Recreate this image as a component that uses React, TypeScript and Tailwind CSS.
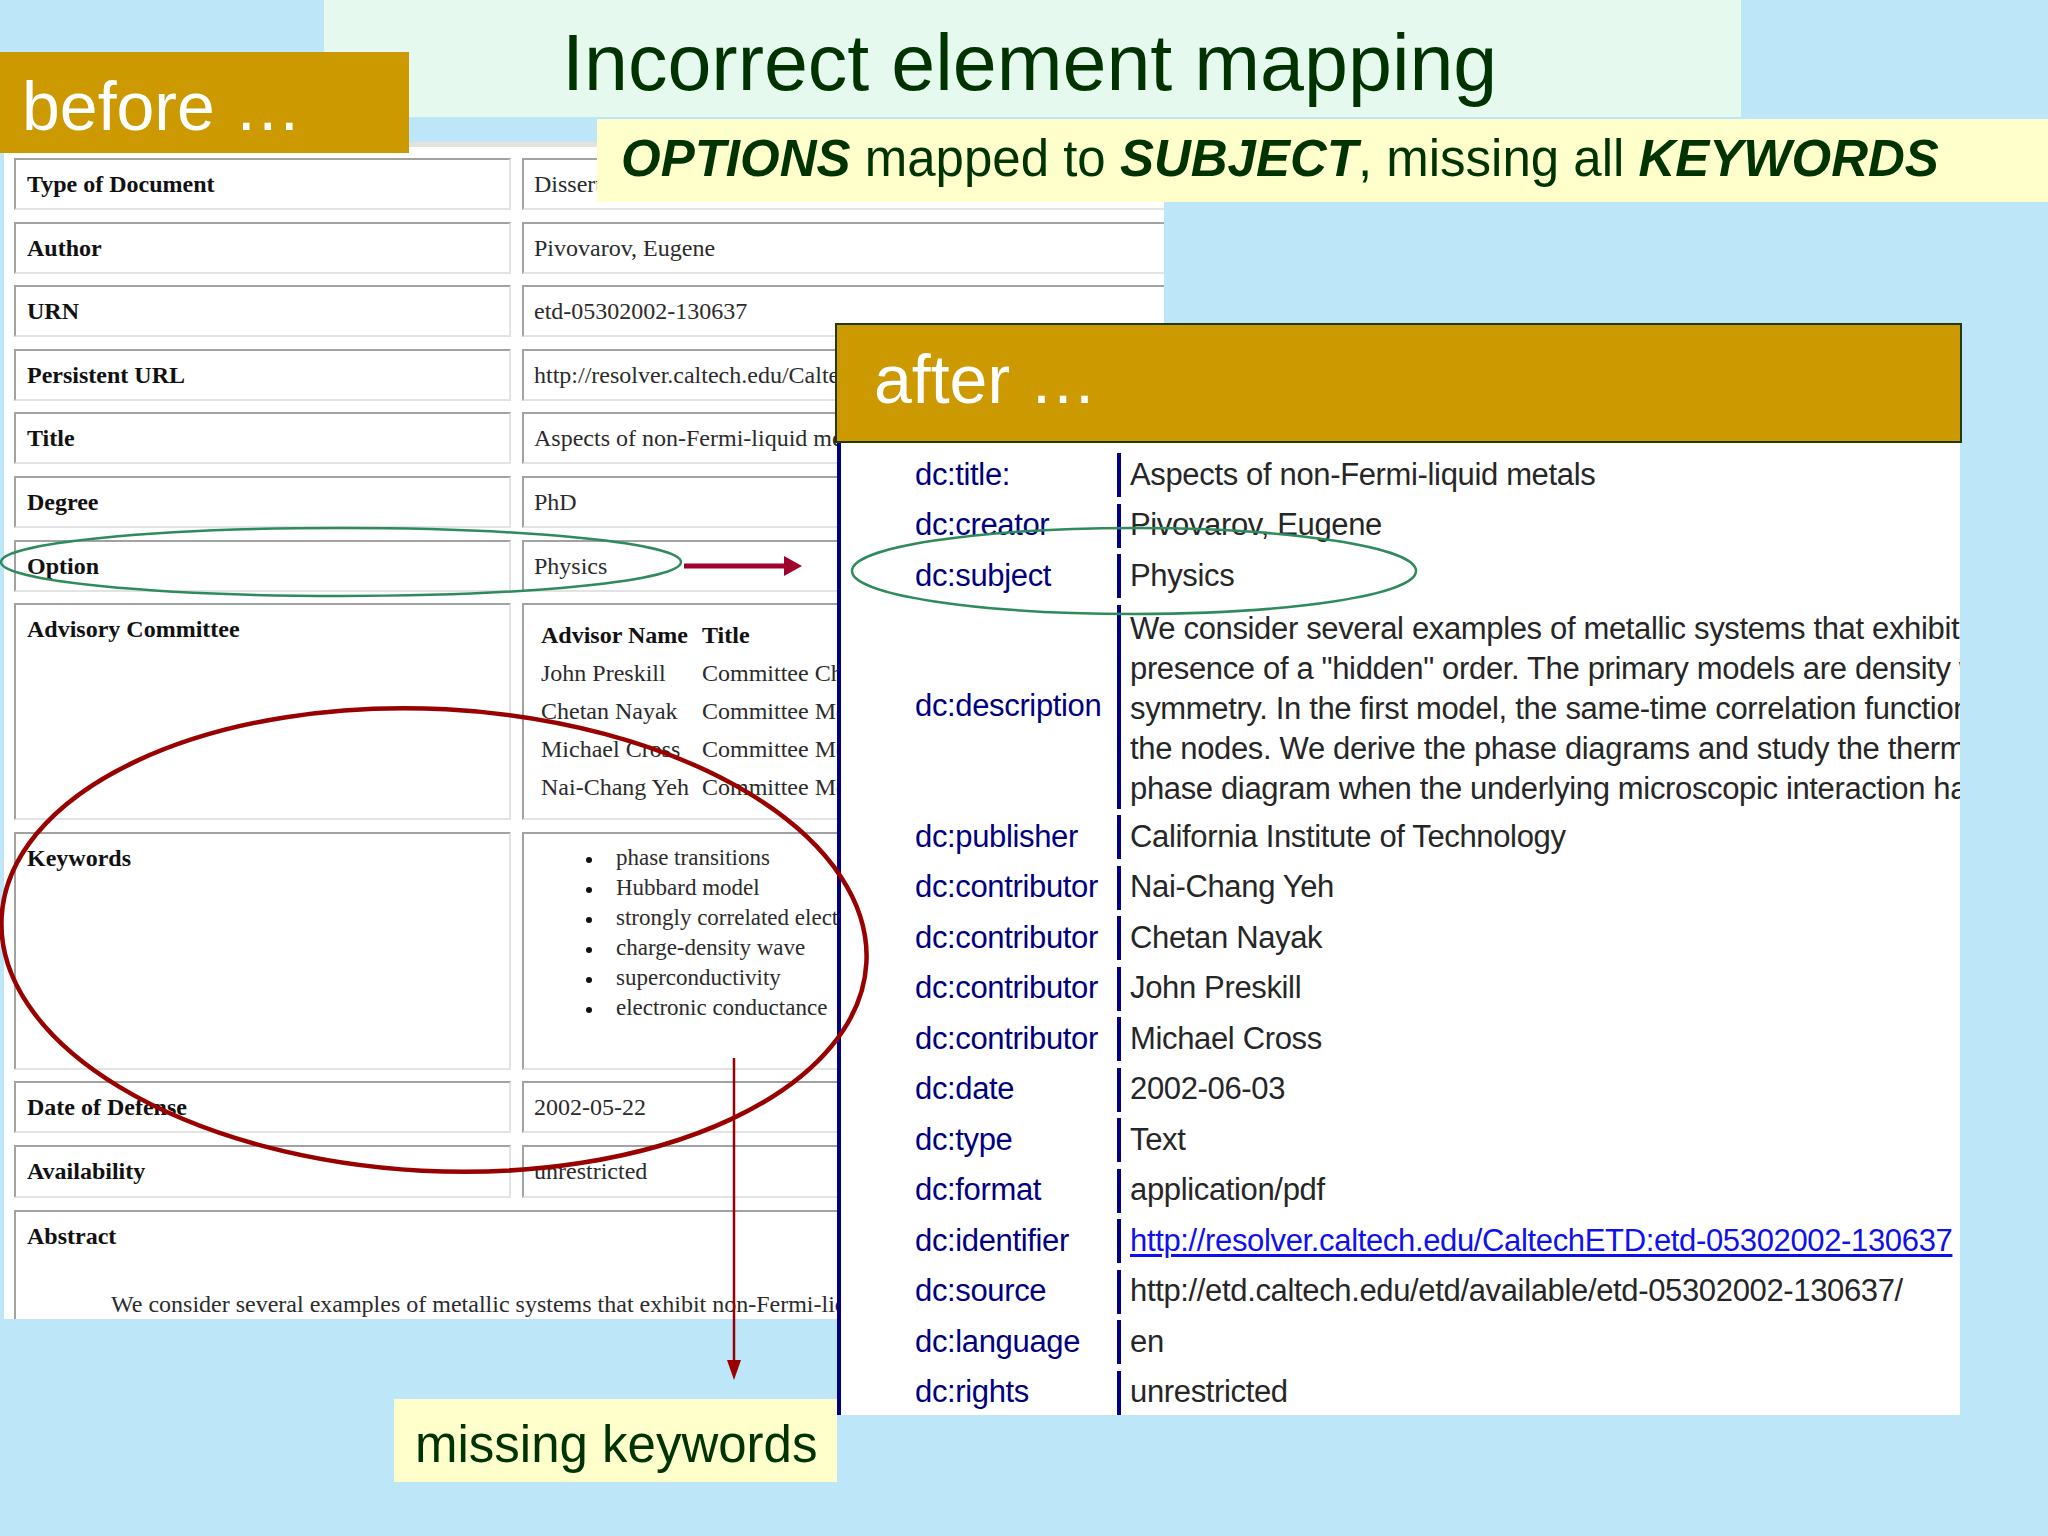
import {ReactNode} from 'react';

const SANS="font-['Liberation_Sans',Arial,sans-serif]";
const SERIF="font-['Liberation_Serif','Times_New_Roman',serif]";

const BEFORE_ROWS=[
	{label:'Type of Document',value:'Dissertation'},
	{label:'Author',value:'Pivovarov, Eugene'},
	{label:'URN',value:'etd-05302002-130637'},
	{label:'Persistent URL',value:'http://resolver.caltech.edu/CaltechETD:etd-05302002-130637'},
	{label:'Title',value:'Aspects of non-Fermi-liquid metals'},
	{label:'Degree',value:'PhD'},
	{label:'Option',value:'Physics'}
];

const ADVISORS=[
	['John Preskill','Committee Chair'],
	['Chetan Nayak','Committee Member'],
	['Michael Cross','Committee Member'],
	['Nai-Chang Yeh','Committee Member']
];

const KEYWORDS=[
	'phase transitions',
	'Hubbard model',
	'strongly correlated electrons',
	'charge-density wave',
	'superconductivity',
	'electronic conductance'
];

const DESCRIPTION=[
	'We consider several examples of metallic systems that exhibit non-Fermi-liquid behavior',
	'presence of a "hidden" order. The primary models are density waves with d-wave',
	'symmetry. In the first model, the same-time correlation functions are computed',
	'the nodes. We derive the phase diagrams and study the thermodynamics',
	'phase diagram when the underlying microscopic interaction has'
];

const AFTER_TOP=[
	['dc:title:','Aspects of non-Fermi-liquid metals'],
	['dc:creator','Pivovarov, Eugene'],
	['dc:subject','Physics']
];

const AFTER_BOTTOM=[
	['dc:publisher','California Institute of Technology'],
	['dc:contributor','Nai-Chang Yeh'],
	['dc:contributor','Chetan Nayak'],
	['dc:contributor','John Preskill'],
	['dc:contributor','Michael Cross'],
	['dc:date','2002-06-03'],
	['dc:type','Text'],
	['dc:format','application/pdf'],
	['dc:identifier','http://resolver.caltech.edu/CaltechETD:etd-05302002-130637'],
	['dc:source','http://etd.caltech.edu/etd/available/etd-05302002-130637/'],
	['dc:language','en'],
	['dc:rights','unrestricted']
];

function Cell({children,className=''}:{children:ReactNode,className?:string})
{
	return (
		<div className={`border-2 border-t-[#a2a2a2] border-l-[#a2a2a2] border-r-[#e3e3e3] border-b-[#e3e3e3] bg-white overflow-hidden ${className}`}>
			{children}
		</div>
	);
}

function BeforePage()
{
	return (
		<div className={`absolute left-[4px] top-[142px] w-[1160px] h-[1177px] overflow-hidden bg-white border-t-[5px] border-[#e3e3db] ${SERIF} text-[24px] leading-[28px]`}>
			<div className="grid grid-cols-[497px_1200px] gap-x-[11px] gap-y-[11.6px] pl-[10px] pt-[11px]">
				{
					BEFORE_ROWS.map(row=>(
						<div key={row.label} className="contents">
							<Cell className="h-[52px] px-[11px] py-[10px] font-bold text-[#111]">{row.label}</Cell>
							<Cell className="h-[52px] px-[10px] py-[10px] text-[#2b2b2b] whitespace-nowrap">{row.value}</Cell>
						</div>
					))
				}
				<Cell className="h-[217px] px-[11px] py-[10px] font-bold text-[#111]">Advisory Committee</Cell>
				<Cell className="h-[217px] pl-[17px] pt-[11px] text-[#2b2b2b]">
					<div className="grid grid-cols-[161px_auto] leading-[38px] whitespace-nowrap">
						<div className="font-bold text-[#111]">Advisor Name</div>
						<div className="font-bold text-[#111]">Title</div>
						{
							ADVISORS.map(([name,title])=>(
								<div key={name} className="contents">
									<div>{name}</div>
									<div>{title}</div>
								</div>
							))
						}
					</div>
				</Cell>
				<Cell className="h-[238px] px-[11px] py-[10px] font-bold text-[#111]">Keywords</Cell>
				<Cell className="h-[238px] pl-[62px] pt-[9px] text-[#2b2b2b] text-[23px] leading-[30px]">
					<ul className="flex flex-col">
						{
							KEYWORDS.map(word=>(
								<li key={word} className="flex items-center whitespace-nowrap">
									<span className="w-[6px] h-[6px] rounded-full bg-[#111] mr-[24px] mt-[4px] shrink-0"></span>
									{word}
								</li>
							))
						}
					</ul>
				</Cell>
				<Cell className="h-[52px] px-[11px] py-[10px] font-bold text-[#111]">Date of Defense</Cell>
				<Cell className="h-[52px] px-[10px] py-[10px] text-[#2b2b2b]">2002-05-22</Cell>
				<Cell className="h-[53px] px-[11px] py-[10px] font-bold text-[#111]">Availability</Cell>
				<Cell className="h-[53px] px-[10px] py-[10px] text-[#2b2b2b]">unrestricted</Cell>
				<Cell className="col-span-2 h-[180px] px-[11px] py-[10px]">
					<div className="font-bold text-[#111]">Abstract</div>
					<div className="mt-[40px] ml-[84px] text-[#2b2b2b] whitespace-nowrap">
						We consider several examples of metallic systems that exhibit non-Fermi-liquid behavior due to the
					</div>
				</Cell>
			</div>
		</div>
	);
}

function DcRow({label,value}:{label:string,value:string})
{
	const isLink=value.startsWith('http://resolver');
	return (
		<div className="flex h-[44px] items-center">
			<div className="w-[202px] shrink-0 text-[#000080] whitespace-nowrap">{label}</div>
			<div className="self-stretch w-[4px] bg-[#000080] shrink-0"></div>
			<div className={`pl-[9px] whitespace-nowrap ${isLink?'text-[#1010ee] underline underline-offset-[3px]':'text-[#262626]'}`}>{value}</div>
		</div>
	);
}

function AfterPage()
{
	return (
		<div className={`absolute left-[837px] top-[443px] w-[1123px] h-[972px] overflow-hidden bg-white border-l-4 border-[#000080] ${SANS} text-[31px] tracking-[-0.35px]`}>
			<div className="flex flex-col gap-[6.5px] pl-[74px] pt-[10px]">
				{AFTER_TOP.map(([label,value])=><DcRow key={label} label={label} value={value}/>)}
				<div className="flex h-[204px] items-center">
					<div className="w-[202px] shrink-0 text-[#000080] whitespace-nowrap">dc:description</div>
					<div className="self-stretch w-[4px] bg-[#000080] shrink-0"></div>
					<div className="pl-[9px] pt-[4px] self-stretch flex flex-col leading-[40px] text-[#262626] whitespace-nowrap">
						{DESCRIPTION.map(line=><div key={line}>{line}</div>)}
					</div>
				</div>
				{AFTER_BOTTOM.map(([label,value],i)=><DcRow key={label+i} label={label} value={value}/>)}
			</div>
		</div>
	);
}

function Annotations()
{
	return (
		<svg className="absolute left-0 top-0 pointer-events-none" width="2048" height="1536" viewBox="0 0 2048 1536">
			<ellipse cx="341" cy="562" rx="340" ry="34" fill="none" stroke="#2f8a5c" strokeWidth="2.5"/>
			<line x1="684" y1="566" x2="788" y2="566" stroke="#a0002e" strokeWidth="5"/>
			<polygon points="784,556 802,566 784,576" fill="#a0002e"/>
			<ellipse cx="1134" cy="571" rx="282" ry="43" fill="none" stroke="#2f8a5c" strokeWidth="2.5"/>
			<ellipse cx="434" cy="940" rx="433" ry="231" fill="none" stroke="#990000" strokeWidth="4.5" transform="rotate(3 434 940)"/>
			<line x1="734" y1="1058" x2="734" y2="1364" stroke="#990000" strokeWidth="2.5"/>
			<polygon points="727,1360 741,1360 734,1380" fill="#990000"/>
		</svg>
	);
}

export default function App()
{
	return (
		<div className={`relative w-[2048px] h-[1536px] overflow-hidden bg-[#bde6f9] ${SANS}`}>
			<div className="absolute left-[324px] top-0 w-[1417px] h-[117px] bg-[#e6f9ef] pl-[238px] pt-[23px]">
				<div className="text-[79px] leading-none text-[#003300] whitespace-nowrap">Incorrect element mapping</div>
			</div>
			<BeforePage/>
			<div className="absolute left-0 top-[52px] w-[409px] h-[101px] bg-[#cc9900] pl-[22px] pt-[20px]">
				<div className="text-[68px] leading-none text-white whitespace-nowrap">before …</div>
			</div>
			<div className="absolute left-[597px] top-[119px] w-[1451px] h-[83px] bg-[#ffffcc] pl-[24px] pt-[14px]">
				<div className="text-[51px] leading-none text-[#003300] whitespace-nowrap">
					<span className="font-bold italic">OPTIONS</span> mapped to <span className="font-bold italic">SUBJECT</span>, missing all <span className="font-bold italic">KEYWORDS</span>
				</div>
			</div>
			<div className="absolute left-[835px] top-[323px] w-[1127px] h-[120px] bg-[#cc9900] border-2 border-[#1f3a05] pl-[37px] pt-[20px]">
				<div className="text-[68px] leading-none text-white whitespace-nowrap">after …</div>
			</div>
			<AfterPage/>
			<Annotations/>
			<div className="absolute left-[394px] top-[1399px] w-[443px] h-[83px] bg-[#ffffcc] pl-[21px] pt-[20px]">
				<div className="text-[51px] leading-none text-[#003300] whitespace-nowrap">missing keywords</div>
			</div>
		</div>
	);
}
